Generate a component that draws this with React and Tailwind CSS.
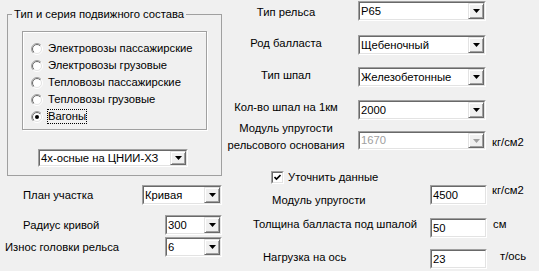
const sunkenOuter = 'border border-t-[#a0a0a0] border-l-[#a0a0a0] border-r-white border-b-white';
const sunkenInner = 'border border-t-[#696969] border-l-[#696969] border-r-[#e3e3e3] border-b-[#e3e3e3]';

function DropButton({ disabled }) {
    return (
        <div className="w-[16px] h-full shrink-0 flex items-center justify-center bg-[#f0f0f0] border border-t-[#e3e3e3] border-l-[#e3e3e3] border-r-[#696969] border-b-[#696969] shadow-[inset_1px_1px_0_#fff,inset_-1px_-1px_0_#a0a0a0]">
            <svg width="7" height="4" viewBox="0 0 7 4">
                <path d="M0 0h7L3.5 4z" fill={disabled ? '#a0a0a0' : '#000'} />
            </svg>
        </div>
    );
}

function Combo({ value, className, disabled }) {
    return (
        <div className={`flex shrink-0 bg-white ${sunkenOuter} ${className}`}>
            <div className={`flex flex-1 min-w-0 items-center ${sunkenInner}`}>
                <span className={`flex-1 pl-[1px] whitespace-nowrap ${disabled ? 'text-[#a0a0a0]' : 'text-black'}`}>{value}</span>
                <DropButton disabled={disabled} />
            </div>
        </div>
    );
}

function Input({ value }) {
    return (
        <div className={`flex shrink-0 w-[57px] h-[20px] bg-white ${sunkenOuter}`}>
            <div className={`flex flex-1 items-center pl-[1px] ${sunkenInner}`}>{value}</div>
        </div>
    );
}

function Radio({ label, checked }) {
    return (
        <div className="flex items-center h-[17px]">
            <svg width="12" height="12" viewBox="0 0 12 12" className="shrink-0">
                <defs>
                    <linearGradient id="ro" x1="0" y1="0" x2="1" y2="1">
                        <stop offset="0.5" stopColor="#a0a0a0" />
                        <stop offset="0.5" stopColor="#ffffff" />
                    </linearGradient>
                    <linearGradient id="ri" x1="0" y1="0" x2="1" y2="1">
                        <stop offset="0.5" stopColor="#696969" />
                        <stop offset="0.5" stopColor="#e3e3e3" />
                    </linearGradient>
                </defs>
                <circle cx="6" cy="6" r="5.5" fill="none" stroke="url(#ro)" />
                <circle cx="6" cy="6" r="4.5" fill="#fff" stroke="url(#ri)" />
                {checked && <circle cx="6" cy="6" r="2" fill="#000" />}
            </svg>
            <span className={`ml-[4px] border leading-[13px] ${checked ? 'border-dotted border-black' : 'border-transparent'}`}>
                {label}
            </span>
        </div>
    );
}

function Checkbox() {
    return (
        <div className={`w-[13px] h-[13px] shrink-0 bg-white ${sunkenOuter}`}>
            <div className={`w-full h-full flex items-center justify-center ${sunkenInner}`}>
                <svg width="7" height="7" viewBox="0 0 7 7">
                    <path d="M0.5 3 L2.5 5 L6.5 1" fill="none" stroke="#000" strokeWidth="1.6" />
                </svg>
            </div>
        </div>
    );
}

export default function App() {
    const radios = ['Электровозы пассажирские', 'Электровозы грузовые', 'Тепловозы пассажирские', 'Тепловозы грузовые', 'Вагоны'];

    return (
        <div className="w-[539px] h-[271px] bg-[#f0f0f0] flex overflow-hidden text-black text-[11.25px] leading-[13px] font-['Liberation_Sans',Arial,sans-serif]">
            {/* left side */}
            <div className="w-[226px] shrink-0 flex flex-col">
                <fieldset className="ml-[7px] mt-[8px] w-[215px] h-[168px] border border-[#a0a0a0]">
                    <legend className="ml-[4px] px-[2px] whitespace-nowrap">Тип и серия подвижного состава</legend>
                    <div className="ml-[14px] mt-[10px] w-[185px] h-[99px] border border-[#a0a0a0] shadow-[1px_1px_0_#fff,inset_1px_1px_0_#fff] pt-[8px] pl-[8px]">
                        {radios.map((r, i) => (
                            <Radio key={r} label={r} checked={i === 4} />
                        ))}
                    </div>
                    <Combo className="ml-[30px] mt-[19px] w-[150px] h-[18px]" value="4х-осные на ЦНИИ-ХЗ" />
                </fieldset>

                <div className="flex items-center mt-[9px] h-[20px]">
                    <span className="pl-[23px] w-[142px] whitespace-nowrap">План участка</span>
                    <Combo className="w-[80px] h-[20px]" value="Кривая" />
                </div>
                <div className="flex items-center mt-[10px] h-[20px]">
                    <span className="pl-[23px] w-[165px] whitespace-nowrap">Радиус кривой</span>
                    <Combo className="w-[57px] h-[20px]" value="300" />
                </div>
                <div className="flex items-center mt-[2px] h-[20px]">
                    <span className="pl-[5px] w-[165px] whitespace-nowrap">Износ головки рельса</span>
                    <Combo className="w-[57px] h-[20px]" value="6" />
                </div>
            </div>

            {/* right side */}
            <div className="flex-1 flex flex-col">
                <div className="flex items-start mt-[1px]">
                    <div className="w-[120px] text-center whitespace-nowrap mt-[5px]">Тип рельса</div>
                    <Combo className="ml-[12px] w-[128px] h-[20px]" value="Р65" />
                </div>
                <div className="flex items-start mt-[14px]">
                    <div className="w-[120px] text-center whitespace-nowrap mt-[2px]">Род балласта</div>
                    <Combo className="ml-[12px] w-[128px] h-[20px]" value="Щебеночный" />
                </div>
                <div className="flex items-start mt-[12px]">
                    <div className="w-[120px] text-center whitespace-nowrap mt-[2px]">Тип шпал</div>
                    <Combo className="ml-[12px] w-[128px] h-[20px]" value="Железобетонные" />
                </div>
                <div className="flex items-start mt-[13px]">
                    <div className="w-[120px] text-center whitespace-nowrap mt-[1px]">Кол-во шпал на 1км</div>
                    <Combo className="ml-[12px] w-[128px] h-[20px]" value="2000" />
                </div>
                <div className="flex items-start mt-[11px] h-[19px]">
                    <div className="w-[120px] text-center whitespace-nowrap leading-[17px] -mt-[11px]">
                        <div>Модуль упругости</div>
                        <div>рельсового основания</div>
                    </div>
                    <Combo className="ml-[12px] w-[128px] h-[19px]" value="1670" disabled />
                    <span className="ml-[6px] mt-[5px]">кг/см2</span>
                </div>

                <div className="flex items-center ml-[45px] mt-[21px] h-[13px]">
                    <Checkbox />
                    <span className="ml-[4px] whitespace-nowrap">Уточнить данные</span>
                </div>
                <div className="flex items-start mt-[1px]">
                    <div className="w-[204px] pl-[46px] mt-[9px] whitespace-nowrap">Модуль упругости</div>
                    <Input value="4500" />
                    <span className="ml-[5px] -mt-[1px]">кг/см2</span>
                </div>
                <div className="flex items-start mt-[11px]">
                    <div className="w-[204px] pl-[27px] whitespace-nowrap">Толщина балласта под шпалой</div>
                    <Input value="50" />
                    <span className="ml-[6px]">см</span>
                </div>
                <div className="flex items-start mt-[11px]">
                    <div className="w-[204px] pl-[37px] mt-[2px] whitespace-nowrap">Нагрузка на ось</div>
                    <Input value="23" />
                    <span className="ml-[13px] mt-[1px]">т/ось</span>
                </div>
            </div>
        </div>
    );
}
